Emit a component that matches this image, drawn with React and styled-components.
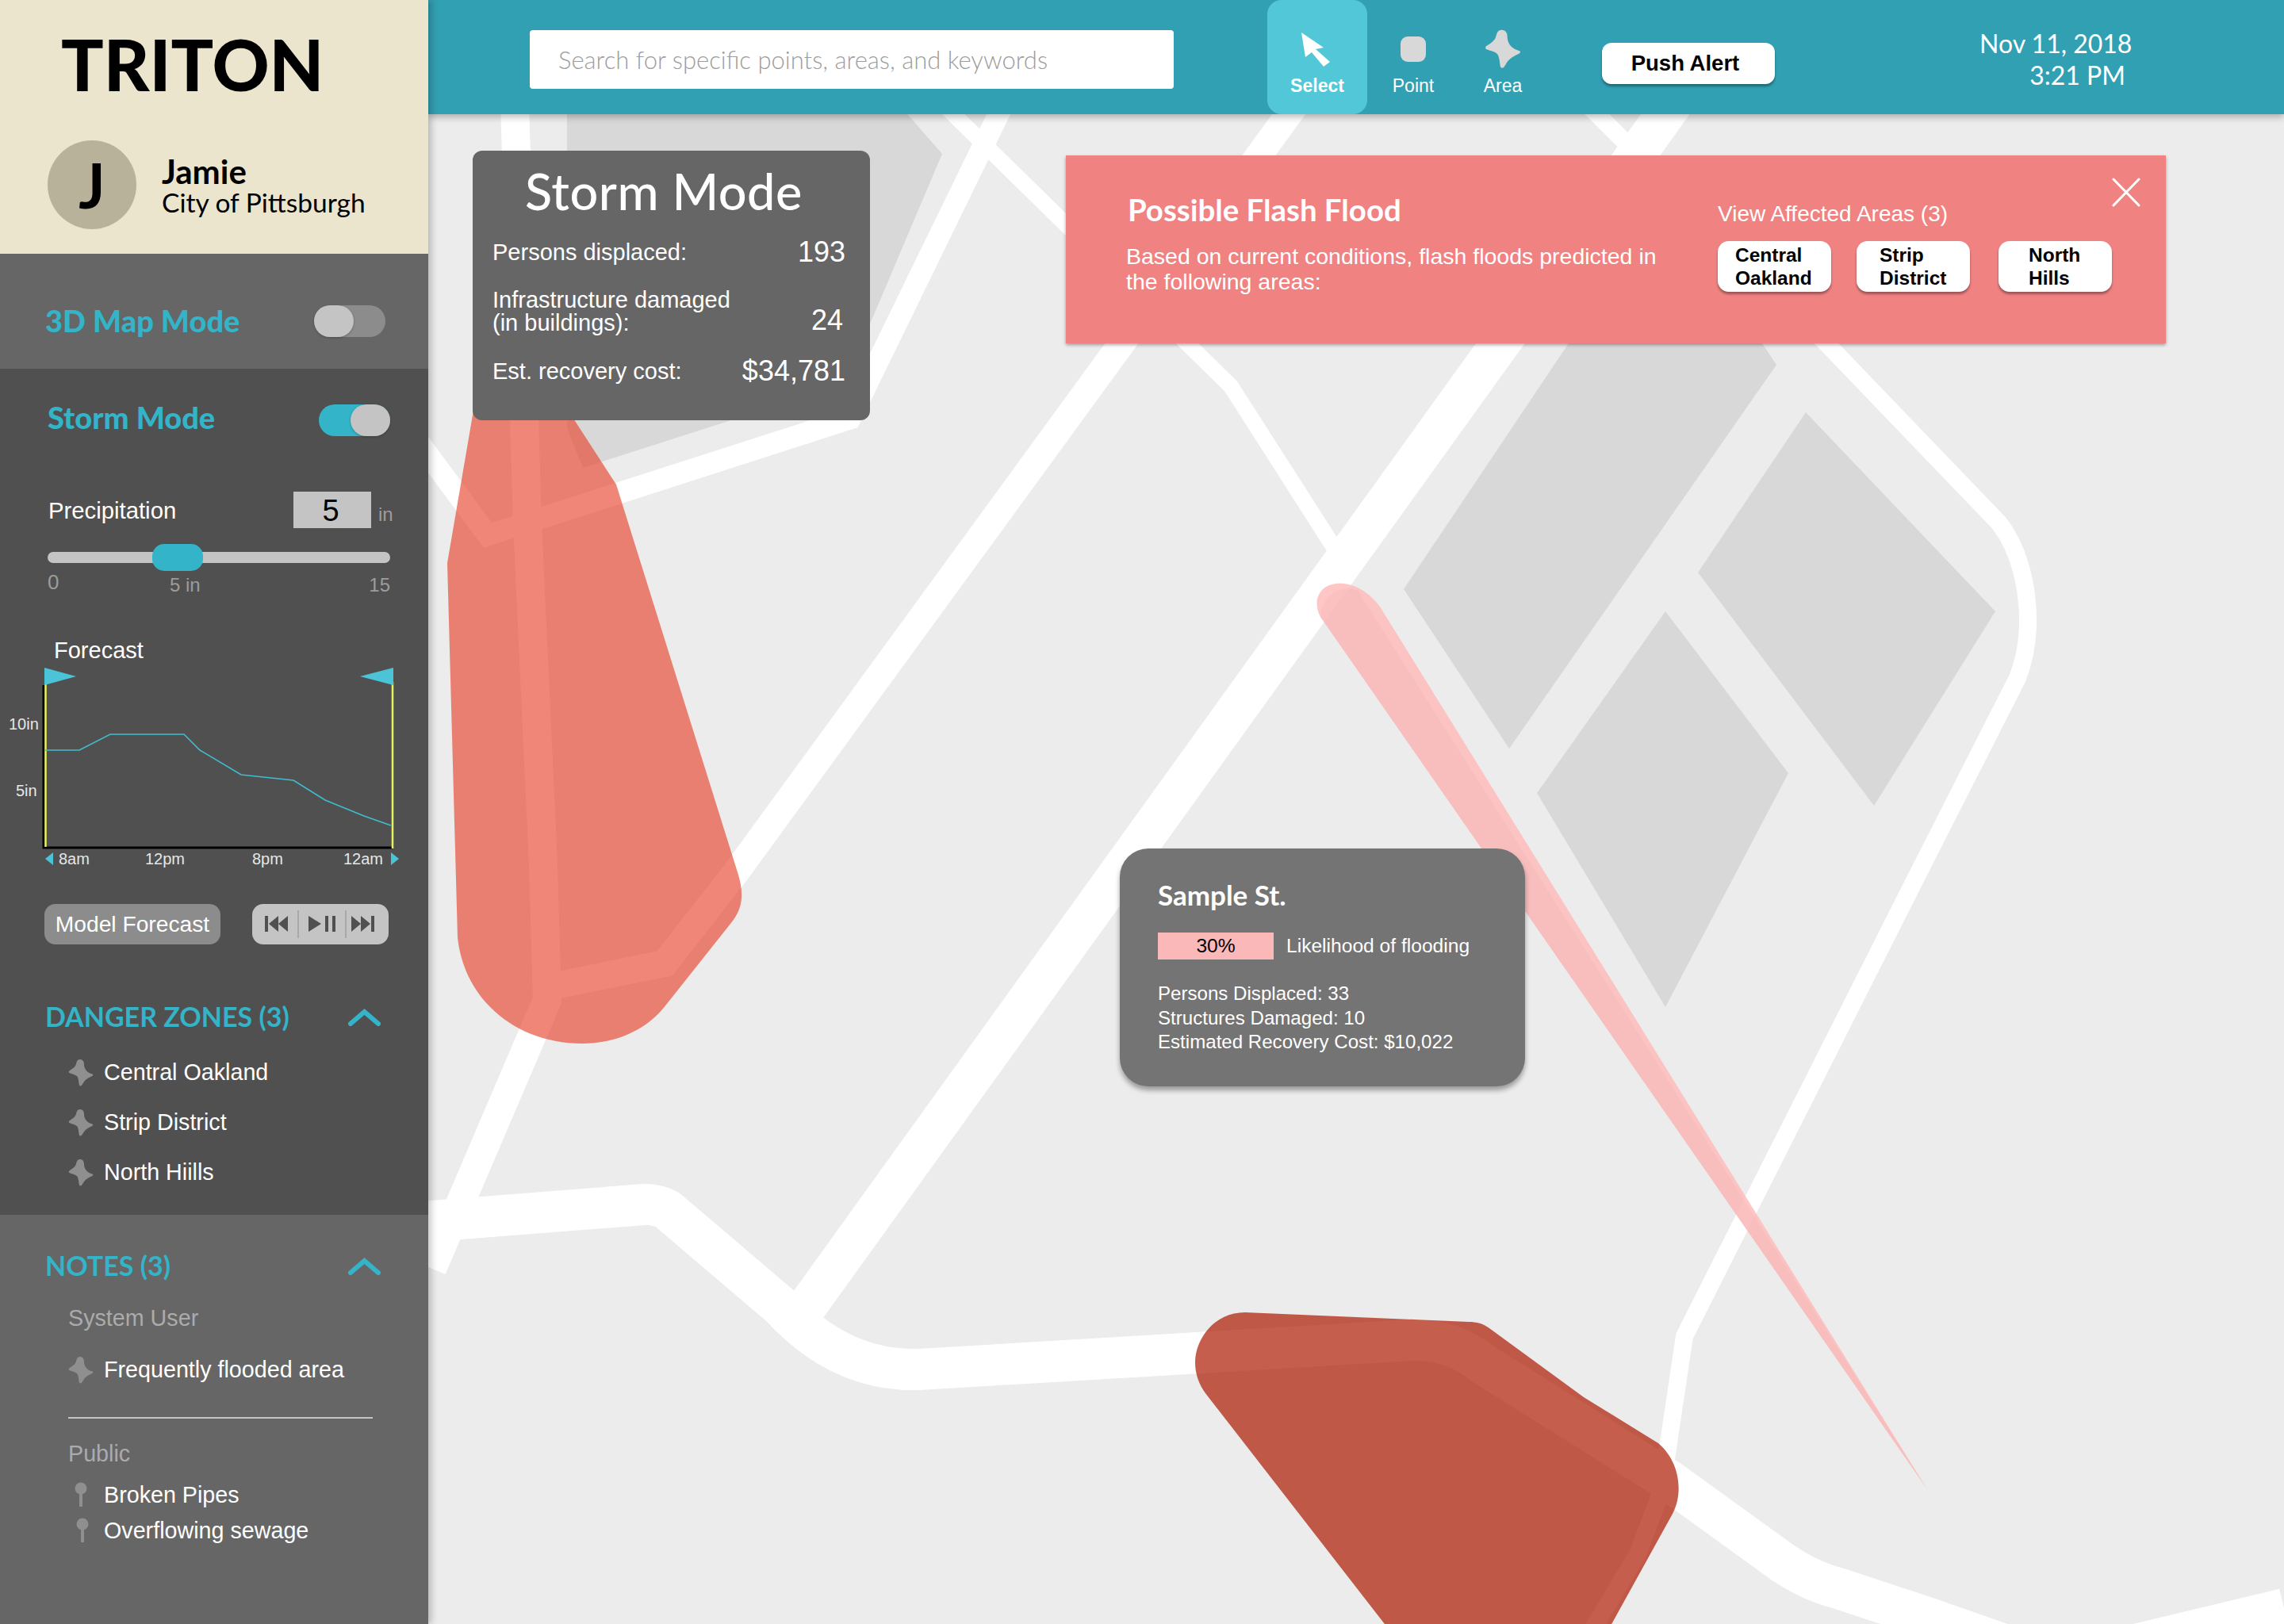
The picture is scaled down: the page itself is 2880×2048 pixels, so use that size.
import styled, { createGlobalStyle } from 'styled-components';

const TEAL = '#33b4c8';
const HEAD = '"Lato", "Open Sans", sans-serif';

const GlobalStyle = createGlobalStyle`
    html, body {
        margin: 0;
        padding: 0;
        background: #ececec;
    }
    body {
        font-family: "Liberation Sans", Arial, sans-serif;
    }
`

const Page = styled.div`
    display: flex;
    width: 2880px;
    height: 2048px;
    overflow: hidden;
`

/* sidebar */

const Sidebar = styled.aside`
    width: 540px;
    flex-shrink: 0;
    display: flex;
    flex-direction: column;
    box-shadow: 4px 0 8px rgba(0, 0, 0, 0.22);
    position: relative;
    z-index: 3;
`

const Profile = styled.div`
    height: 320px;
    background: #ebe5cd;
`

const Logo = styled.div`
    height: 164px;
    line-height: 162px;
    margin-left: 77px;
    font-family: ${HEAD};
    font-weight: 900;
    font-size: 89px;
    color: #000;
`

const UserRow = styled.div`
    display: flex;
    align-items: center;
    gap: 32px;
    margin: 13px 0 0 60px;
`

const Avatar = styled.div`
    width: 112px;
    height: 112px;
    border-radius: 50%;
    background: #b8b29b;
    display: flex;
    align-items: center;
    justify-content: center;
    font-family: ${HEAD};
    font-weight: 700;
    font-size: 78px;
    color: #000;
`

const UserName = styled.div`
    margin-top: 1px;
    font-family: ${HEAD};
    font-weight: 700;
    font-size: 42px;
    line-height: 42px;
    color: #000;
`

const UserOrg = styled.div`
    font-family: ${HEAD};
    font-size: 33.5px;
    line-height: 36px;
    color: #000;
`

const MapModeSection = styled.section`
    height: 145px;
    box-sizing: border-box;
    background: #666;
    display: flex;
    align-items: center;
    justify-content: space-between;
    padding: 24px 54px 0 57px;
`

const ModeTitle = styled.div`
    margin-top: -2px;
    font-family: ${HEAD};
    font-weight: 900;
    font-size: 38px;
    color: ${TEAL};
`

const Toggle = styled.div`
    position: relative;
    width: 90px;
    height: 40px;
    border-radius: 20px;
    background: ${p => (p.$on ? TEAL : '#8c8c8c')};
`

const Knob = styled.div`
    position: absolute;
    top: 0;
    ${p => (p.$on ? 'right: 0;' : 'left: 0;')}
    width: 50px;
    height: 40px;
    border-radius: 20px;
    background: #c4c4c4;
    box-shadow: 0 1px 3px rgba(0, 0, 0, 0.25);
`

const StormSection = styled.section`
    height: 1067px;
    box-sizing: border-box;
    background: #505050;
    padding: 45px 48px 0 60px;
    display: flex;
    flex-direction: column;
`

const StormHeader = styled.div`
    display: flex;
    justify-content: space-between;
    align-items: center;
    ${ModeTitle} {
        margin: -9px 0 0 0;
    }
`

const PrecipRow = styled.div`
    display: flex;
    align-items: center;
    margin-top: 70px;
`

const PrecipLabel = styled.div`
    flex: 1;
    margin: 2px 0 0 1px;
    font-size: 29.3px;
    color: #fff;
`

const PrecipBox = styled.div`
    width: 98px;
    height: 46px;
    box-sizing: border-box;
    padding: 2px 4px 0 0;
    background: #c4c4c4;
    display: flex;
    align-items: center;
    justify-content: center;
    font-size: 38px;
    color: #000;
`

const PrecipUnit = styled.div`
    width: 15px;
    margin: 12px 0 0 9px;
    font-size: 24px;
    color: #9c9c9c;
`

const SliderTrack = styled.div`
    position: relative;
    height: 14px;
    margin-top: 30px;
    border-radius: 7px;
    background: #c4c4c4;
`

const SliderThumb = styled.div`
    position: absolute;
    left: 132px;
    top: -10px;
    width: 64px;
    height: 34px;
    border-radius: 15px;
    background: ${TEAL};
`

const SliderLabels = styled.div`
    display: grid;
    grid-template-columns: 154px 1fr auto;
    margin-top: 14px;
    font-size: 24px;
    line-height: 28px;
    color: #9c9c9c;
`

const SliderMin = styled.span`
    margin-top: -4px;
    font-size: 26px;
`

const ForecastTitle = styled.div`
    margin: 51px 0 0 8px;
    font-size: 29px;
    line-height: 34px;
    color: #fff;
`

const ChartSvg = styled.svg`
    display: block;
    margin: -2px 0 0 -60px;
    width: 540px;
    height: 260px;
    flex-shrink: 0;
    text {
        font-family: "Liberation Sans", Arial, sans-serif;
        font-size: 20px;
        fill: #e6e6e6;
    }
`

const ChartButtons = styled.div`
    display: flex;
    gap: 40px;
    margin: 45px 0 0 -4px;
`

const ModelButton = styled.div`
    width: 222px;
    height: 51px;
    border-radius: 14px;
    background: #8c8c8c;
    display: flex;
    align-items: center;
    justify-content: center;
    font-size: 28.2px;
    color: #fff;
`

const Player = styled.div`
    width: 172px;
    height: 51px;
    border-radius: 14px;
    background: #c4c4c4;
    overflow: hidden;
`

const SectionHeader = styled.div`
    height: 40px;
    display: flex;
    align-items: center;
    justify-content: space-between;
    margin: ${p => p.$top}px 12px 0 -3px;
    font-family: ${HEAD};
    font-weight: 700;
    font-size: 34px;
    color: ${TEAL};
`

const Chevron = styled.svg`
    width: 41px;
    height: 22px;
    margin-top: 4px;
    fill: none;
    stroke: ${TEAL};
    stroke-width: 6;
    stroke-linecap: round;
`

const ItemList = styled.div`
    margin: ${p => p.$top}px 0 0 26px;
`

const Item = styled.div`
    height: ${p => p.$height || 63}px;
    display: flex;
    align-items: center;
    gap: 13px;
    font-size: 28.7px;
    color: #fff;
`

const ItemIcon = styled.svg`
    width: 32px;
    height: 36px;
    flex-shrink: 0;
    fill: #8f8f8f;
`

const NotesSection = styled.section`
    flex: 1;
    background: #666;
    padding: 43px 48px 0 60px;
`

const NoteGroup = styled.div`
    margin: ${p => p.$top}px 0 0 26px;
    font-size: 28.7px;
    line-height: 34px;
    color: #ababab;
`

const NoteDivider = styled.div`
    width: 384px;
    height: 2px;
    margin: 28px 0 0 26px;
    background: #c4c4c4;
`

/* top bar */

const Main = styled.main`
    flex: 1;
    display: flex;
    flex-direction: column;
    min-width: 0;
`

const TopBar = styled.header`
    height: 144px;
    flex-shrink: 0;
    box-sizing: border-box;
    padding-left: 128px;
    display: flex;
    align-items: center;
    background: #31a0b2;
    box-shadow: 0 4px 8px rgba(0, 0, 0, 0.25);
    position: relative;
    z-index: 2;
`

const Search = styled.div`
    width: 812px;
    height: 74px;
    margin-top: 6px;
    box-sizing: border-box;
    padding: 0 0 0 36px;
    border-radius: 4px;
    background: #fff;
    display: flex;
    align-items: center;
    font-family: ${HEAD};
    font-weight: 300;
    font-size: 31px;
    color: #9d9d9d;
`

const Tools = styled.nav`
    display: flex;
    height: 100%;
    margin-left: 118px;
`

const Tool = styled.div`
    width: ${p => p.$width}px;
    box-sizing: border-box;
    padding-top: 38px;
    display: flex;
    flex-direction: column;
    align-items: center;
    border-radius: 18px;
    background: ${p => (p.$active ? '#52c7d8' : 'transparent')};
    color: #fff;
    font-size: 23px;
    font-weight: ${p => (p.$active ? 700 : 400)};
`

const ToolIcon = styled.div`
    height: 48px;
    display: flex;
    align-items: center;
    justify-content: center;
`

const ToolLabel = styled.div`
    margin-top: 8px;
    line-height: 28px;
`

const PointSquare = styled.div`
    width: 32px;
    height: 32px;
    border-radius: 9px;
    background: #d8d8d8;
`

const PushButton = styled.div`
    width: 218px;
    height: 52px;
    margin: 16px 0 0 70px;
    box-sizing: border-box;
    padding-right: 8px;
    border-radius: 12px;
    background: #fff;
    box-shadow: 0 3px 3px rgba(0, 0, 0, 0.35);
    display: flex;
    align-items: center;
    justify-content: center;
    font-size: 27.5px;
    font-weight: 700;
    color: #000;
`

const DateBlock = styled.div`
    width: 192px;
    margin: 6px 0 0 258px;
    text-align: right;
    white-space: nowrap;
    font-family: ${HEAD};
    font-size: 32px;
    line-height: 40px;
    color: #fff;
    span {
        display: block;
        margin-right: 8px;
    }
`

/* map */

const MapArea = styled.div`
    position: relative;
    flex: 1;
    background: #ececec;
`

const MapSvg = styled.svg`
    position: absolute;
    inset: 0;
    width: 100%;
    height: 100%;
    display: block;
`

const StormCard = styled.div`
    position: absolute;
    left: 56px;
    top: 46px;
    width: 501px;
    height: 340px;
    box-sizing: border-box;
    padding: 16px 31px 0 25px;
    border-radius: 12px;
    background: #666;
    color: #fff;
`

const StormTitle = styled.div`
    font-family: ${HEAD};
    font-weight: 500;
    font-size: 63px;
    line-height: 70px;
    margin-left: 41px;
    letter-spacing: 0.5px;
`

const StatRow = styled.div`
    display: flex;
    align-items: center;
    justify-content: space-between;
    margin-top: ${p => p.$top}px;
    min-height: 44px;
    font-size: 29px;
    line-height: 29px;
`

const StatValue = styled.div`
    font-size: 36px;
    line-height: ${p => (p.$low ? 36 : 44)}px;
    ${p => (p.$low ? 'align-self: flex-end; margin-right: 3px;' : '')}
`

const Alert = styled.div`
    position: absolute;
    left: 804px;
    top: 52px;
    width: 1387px;
    height: 237px;
    display: flex;
    background: #f08282;
    box-shadow: 0 2px 4px rgba(0, 0, 0, 0.35);
    color: #fff;
`

const AlertInfo = styled.div`
    width: 822px;
    box-sizing: border-box;
    padding: 50px 0 0 78px;
`

const AlertTitle = styled.div`
    font-family: ${HEAD};
    font-weight: 700;
    font-size: 38.4px;
    line-height: 36px;
`

const AlertText = styled.div`
    margin: 25px 0 0 -2px;
    font-size: 28.5px;
    line-height: 32px;
`

const AlertAreas = styled.div`
    padding-top: 58px;
`

const AreasLabel = styled.div`
    font-size: 28px;
    line-height: 32px;
`

const AreaButtons = styled.div`
    display: flex;
    margin-top: 18px;
`

const AreaButton = styled.div`
    width: 143px;
    height: 64px;
    box-sizing: border-box;
    margin-left: ${p => p.$left}px;
    padding-left: ${p => p.$pad}px;
    border-radius: 14px;
    background: #fff;
    box-shadow: 0 3px 3px rgba(0, 0, 0, 0.35);
    display: flex;
    align-items: center;
    font-size: 24.5px;
    font-weight: 700;
    line-height: 29px;
    color: #000;
`

const CloseIcon = styled.svg`
    position: absolute;
    right: 32px;
    top: 28px;
    width: 36px;
    height: 37px;
    stroke: #fff;
    stroke-width: 3;
    stroke-linecap: round;
`

const SampleCard = styled.div`
    position: absolute;
    left: 872px;
    top: 926px;
    width: 511px;
    height: 300px;
    box-sizing: border-box;
    padding: 38px 0 0 48px;
    border-radius: 36px;
    background: #747474;
    box-shadow: 0 5px 6px rgba(0, 0, 0, 0.35);
    color: #fff;
`

const SampleTitle = styled.div`
    font-family: ${HEAD};
    font-weight: 700;
    font-size: 35px;
    line-height: 40px;
`

const LikelihoodRow = styled.div`
    display: flex;
    align-items: center;
    gap: 16px;
    margin-top: 28px;
    font-size: 24.6px;
`

const LikelihoodBar = styled.div`
    width: 146px;
    height: 34px;
    background: #fbb8b8;
    display: flex;
    align-items: center;
    justify-content: center;
    color: #000;
`

const SampleStats = styled.div`
    margin-top: 28px;
    font-size: 24.1px;
    line-height: 30.5px;
`

const STAR = 'M100 24C114 24 122 34 122 48C122 62 126 76 138 88C146 96 158 100 168 104C172 106 172 110 168 113C150 122 134 130 124 142C118 150 114 160 108 166C102 170 96 168 95 160C93 146 92 130 86 118C80 108 60 104 44 98C38 95 38 90 42 86C56 76 72 68 78 52C82 36 86 24 100 24Z';

const StarIcon = () => (
    <ItemIcon viewBox="36 22 138 150"><path d={STAR} /></ItemIcon>
);

const PinIcon = ({ shift = 0 }) => (
    <ItemIcon viewBox="0 0 32 36">
        <circle cx={16 + shift} cy={9} r={7.5} />
        <rect x={14 + shift} y={10} width={4} height={22} />
    </ItemIcon>
);

const ChevronUp = () => (
    <Chevron viewBox="0 0 41 22"><polyline points="3,19 20.5,4 38,19" /></Chevron>
);

const PlayerIcons = () => (
    <svg viewBox="318 1140 172 51" width="172" height="51">
        <g fill="#505050">
            <rect x="334" y="1155" width="4" height="20" />
            <polygon points="339,1165 351,1155 351,1175" />
            <polygon points="351,1165 363,1155 363,1175" />
            <polygon points="389,1155 405,1165 389,1175" />
            <rect x="410" y="1155" width="4" height="20" />
            <rect x="419" y="1155" width="4" height="20" />
            <polygon points="443,1155 455,1165 443,1175" />
            <polygon points="455,1155 467,1165 455,1175" />
            <rect x="468" y="1155" width="4" height="20" />
        </g>
        <rect x="375" y="1148" width="2" height="35" fill="#a8a8a8" />
        <rect x="435" y="1148" width="2" height="35" fill="#a8a8a8" />
    </svg>
);

const ForecastChart = () => (
    <ChartSvg viewBox="0 835 540 260">
        <path d="M55 864V1069H495" fill="none" stroke="#000" strokeWidth="3" />
        <line x1="57.5" y1="860" x2="57.5" y2="1068" stroke="#e8f05a" strokeWidth="2.5" />
        <line x1="495" y1="860" x2="495" y2="1070" stroke="#e8f05a" strokeWidth="2.5" />
        <polyline
            points="57,946 100,946 139,926 232,926 252,946 304,977 370,984 410,1009 459,1029 493,1041"
            fill="none"
            stroke="#3fbdd0"
            strokeWidth="1.6"
        />
        <polygon points="56,842 96,853 56,864" fill="#4bc4d8" />
        <polygon points="496,842 454,853 496,864" fill="#4bc4d8" />
        <polygon points="67,1075 67,1091 57,1083" fill="#4bc4d8" />
        <polygon points="493,1075 493,1091 503,1083" fill="#4bc4d8" />
        <text x="11" y="920">10in</text>
        <text x="20" y="1004">5in</text>
        <text x="74" y="1090">8am</text>
        <text x="183" y="1090">12pm</text>
        <text x="318" y="1090">8pm</text>
        <text x="433" y="1090">12am</text>
    </ChartSvg>
);

const MapDrawing = () => (
    <MapSvg viewBox="540 144 2340 1904">
        {/* buildings */}
        <g fill="#d8d8d8">
            <polygon points="715,130 1132,130 1188,194 1065,484 735,590 715,540" />
            <polygon points="1770,743 2000,400 2200,400 2240,460 1903,944" />
            <polygon points="2277,520 2516,771 2363,1016 2141,722" />
            <polygon points="2100,771 2255,975 2100,1270 1938,1000" />
        </g>
        {/* roads */}
        <g fill="none" stroke="#fff">
            <path strokeWidth="36" d="M649 130L665 660L685 1090L690 1261L545 1600" />
            <path strokeWidth="27" d="M530 560L615 675L1072 528L1266 130" />
            <path strokeWidth="20" d="M1190 132L1552 487L1685 695" />
            <path strokeWidth="34" d="M1650 110L928 1100L838 1215L690 1245" />
            <path strokeWidth="50" d="M2110 130L1005 1665" />
            <path strokeWidth="22" d="M2000 130L2304 434L2521 660C2548 695 2558 745 2557 790C2556 815 2552 835 2544 855L2422 1095L2124 1685L2095 1880L2065 1960L2005 2060" />
            <path strokeWidth="52" d="M530 1541L812 1519Q828 1518 842 1526L984 1647Q1060 1730 1159 1727L1780 1690Q1830 1688 1870 1720L2106 1868L2250 1972Q2285 1995 2318 2003L2430 2040L2530 2075" />
            <path strokeWidth="50" d="M2580 2100L2880 2028" />
        </g>
        {/* flood zones */}
        <path
            d="M600 500L564 710L577 1182C585 1260 650 1316 734 1316C775 1316 815 1300 840 1267L921 1165C938 1145 938 1125 930 1100L777 611L705 500Z"
            fill="rgb(230,63,40)"
            opacity="0.63"
        />
        <path
            d="M1570 1655C1530 1655 1507 1690 1507 1718C1507 1733 1512 1746 1520 1757L1763 2070H2020L2109 1909C2122 1885 2120 1845 2091 1820L1997 1762L1878 1675C1870 1669 1862 1667 1852 1667Z"
            fill="rgb(174,26,3)"
            opacity="0.7"
        />
        <path
            d="M2430 1878L1740 765C1725 745 1705 734 1685 736C1662 738 1655 760 1665 778Z"
            fill="rgb(255,188,188)"
            opacity="0.85"
        />
        <path
            d="M2430 1878L1712 745C1695 737 1668 745 1665 778Z"
            fill="rgb(235,165,165)"
            opacity="0.18"
        />
    </MapSvg>
);

const App = () => {
    return (
        <Page>
            <GlobalStyle />
            <Sidebar>
                <Profile>
                    <Logo>TRITON</Logo>
                    <UserRow>
                        <Avatar>J</Avatar>
                        <div>
                            <UserName>Jamie</UserName>
                            <UserOrg>City of Pittsburgh</UserOrg>
                        </div>
                    </UserRow>
                </Profile>

                <MapModeSection>
                    <ModeTitle>3D Map Mode</ModeTitle>
                    <Toggle><Knob /></Toggle>
                </MapModeSection>

                <StormSection>
                    <StormHeader>
                        <ModeTitle>Storm Mode</ModeTitle>
                        <Toggle $on><Knob $on /></Toggle>
                    </StormHeader>

                    <PrecipRow>
                        <PrecipLabel>Precipitation</PrecipLabel>
                        <PrecipBox>5</PrecipBox>
                        <PrecipUnit>in</PrecipUnit>
                    </PrecipRow>
                    <SliderTrack><SliderThumb /></SliderTrack>
                    <SliderLabels>
                        <SliderMin>0</SliderMin>
                        <span>5 in</span>
                        <span>15</span>
                    </SliderLabels>

                    <ForecastTitle>Forecast</ForecastTitle>
                    <ForecastChart />
                    <ChartButtons>
                        <ModelButton>Model Forecast</ModelButton>
                        <Player><PlayerIcons /></Player>
                    </ChartButtons>

                    <SectionHeader $top={70}>
                        <span>DANGER ZONES (3)</span>
                        <ChevronUp />
                    </SectionHeader>
                    <ItemList $top={20}>
                        <Item><StarIcon />Central Oakland</Item>
                        <Item><StarIcon />Strip District</Item>
                        <Item><StarIcon />North Hiills</Item>
                    </ItemList>
                </StormSection>

                <NotesSection>
                    <SectionHeader $top={0}>
                        <span>NOTES (3)</span>
                        <ChevronUp />
                    </SectionHeader>
                    <NoteGroup $top={30}>System User</NoteGroup>
                    <ItemList $top={17}>
                        <Item><StarIcon />Frequently flooded area</Item>
                    </ItemList>
                    <NoteDivider />
                    <NoteGroup $top={27}>Public</NoteGroup>
                    <ItemList $top={13}>
                        <Item $height={45}><PinIcon />Broken Pipes</Item>
                        <Item $height={45}><PinIcon shift={2} />Overflowing sewage</Item>
                    </ItemList>
                </NotesSection>
            </Sidebar>

            <Main>
                <TopBar>
                    <Search>Search for specific points, areas, and keywords</Search>
                    <Tools>
                        <Tool $width={126} $active>
                            <ToolIcon>
                                <svg viewBox="1644 38 40 48" width="40" height="48">
                                    <polygon fill="#fff" points="1644,41 1672,60 1662,62 1680,78 1672,84 1657,66 1649,72" />
                                </svg>
                            </ToolIcon>
                            <ToolLabel>Select</ToolLabel>
                        </Tool>
                        <Tool $width={116}>
                            <ToolIcon><PointSquare /></ToolIcon>
                            <ToolLabel>Point</ToolLabel>
                        </Tool>
                        <Tool $width={110}>
                            <ToolIcon>
                                <svg viewBox="36 22 138 150" width="46" height="50">
                                    <path fill="#d8d8d8" d={STAR} />
                                </svg>
                            </ToolIcon>
                            <ToolLabel>Area</ToolLabel>
                        </Tool>
                    </Tools>
                    <PushButton>Push Alert</PushButton>
                    <DateBlock>
                        Nov 11, 2018
                        <span>3:21 PM</span>
                    </DateBlock>
                </TopBar>

                <MapArea>
                    <MapDrawing />

                    <StormCard>
                        <StormTitle>Storm Mode</StormTitle>
                        <StatRow $top={20}>
                            <span>Persons displaced:</span>
                            <StatValue>193</StatValue>
                        </StatRow>
                        <StatRow $top={24}>
                            <span>Infrastructure damaged<br />(in buildings):</span>
                            <StatValue $low>24</StatValue>
                        </StatRow>
                        <StatRow $top={24}>
                            <span>Est. recovery cost:</span>
                            <StatValue>$34,781</StatValue>
                        </StatRow>
                    </StormCard>

                    <Alert>
                        <AlertInfo>
                            <AlertTitle>Possible Flash Flood</AlertTitle>
                            <AlertText>
                                Based on current conditions, flash floods predicted in<br />
                                the following areas:
                            </AlertText>
                        </AlertInfo>
                        <AlertAreas>
                            <AreasLabel>View Affected Areas (3)</AreasLabel>
                            <AreaButtons>
                                <AreaButton $left={0} $pad={22}><span>Central<br />Oakland</span></AreaButton>
                                <AreaButton $left={32} $pad={29}><span>Strip<br />District</span></AreaButton>
                                <AreaButton $left={36} $pad={38}><span>North<br />Hills</span></AreaButton>
                            </AreaButtons>
                        </AlertAreas>
                        <CloseIcon viewBox="0 0 36 37">
                            <line x1="2" y1="2" x2="34" y2="35" />
                            <line x1="34" y1="2" x2="2" y2="35" />
                        </CloseIcon>
                    </Alert>

                    <SampleCard>
                        <SampleTitle>Sample St.</SampleTitle>
                        <LikelihoodRow>
                            <LikelihoodBar>30%</LikelihoodBar>
                            Likelihood of flooding
                        </LikelihoodRow>
                        <SampleStats>
                            Persons Displaced: 33<br />
                            Structures Damaged: 10<br />
                            Estimated Recovery Cost: $10,022
                        </SampleStats>
                    </SampleCard>
                </MapArea>
            </Main>
        </Page>
    );
};

export default App;
